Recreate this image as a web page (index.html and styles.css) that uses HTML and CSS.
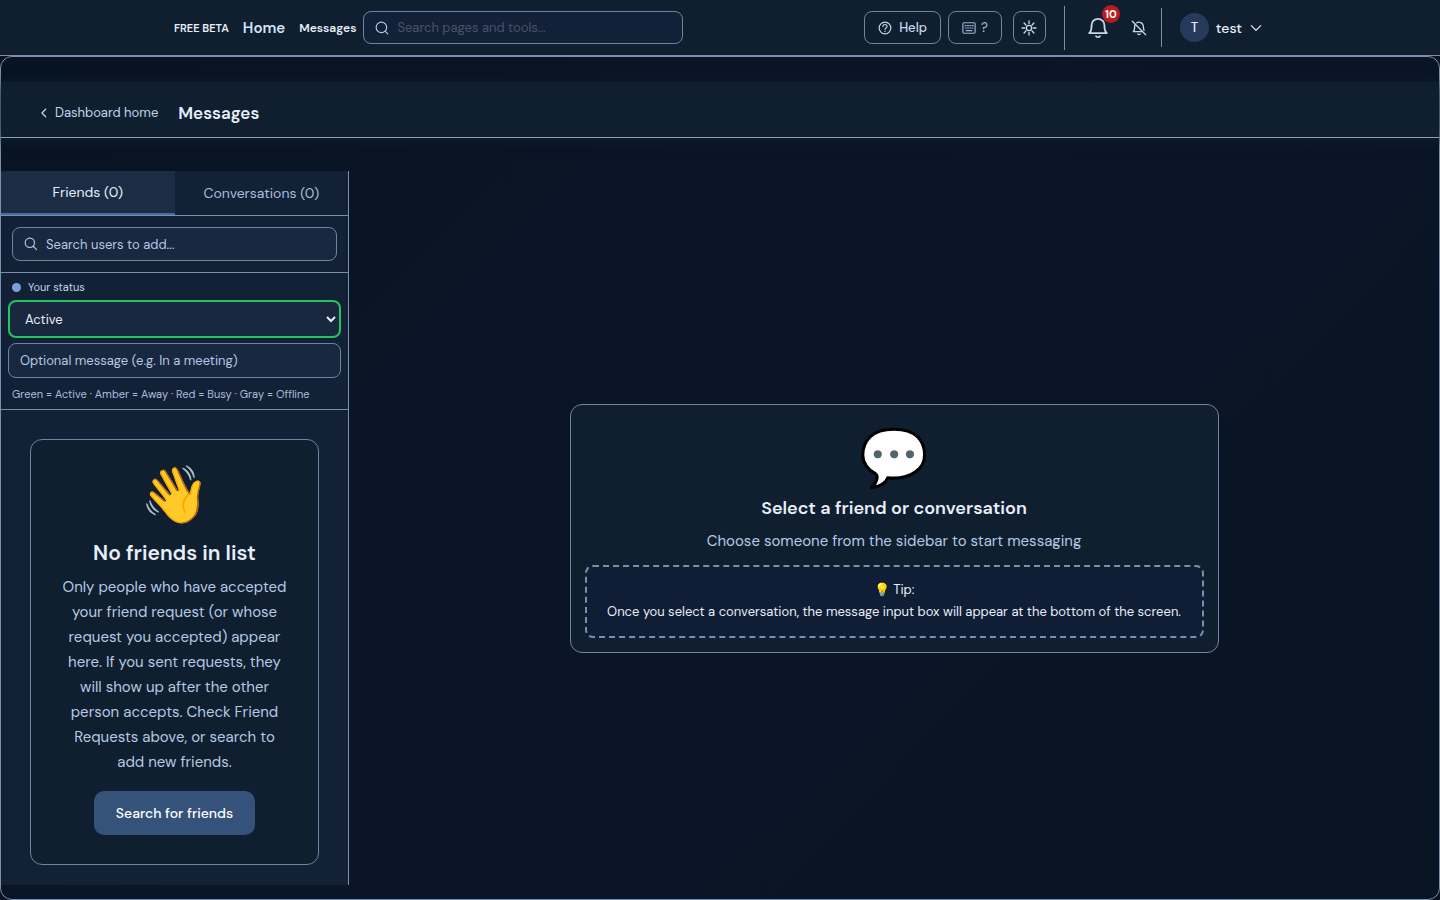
FILE: index.html
```
<!DOCTYPE html>
<html lang="en">
<head>
  <meta charset="UTF-8" />
  <meta name="viewport" content="width=device-width, initial-scale=1.0"/>
  <title>Messages</title>
  <link rel="stylesheet" href="styles.css">
</head>
<body>
  <header class="topbar">
    <div class="topbar-inner">
      <nav class="topnav">
        <span class="beta">FREE BETA</span>
        <a class="home-link" href="#">Home</a>
        <a class="messages-link" href="#">Messages</a>
      </nav>
      <label class="search-box top-search">
        <svg class="icon" viewBox="0 0 24 24"><circle cx="11" cy="11" r="9"/><path d="M22 22l-4.300-4.300"/></svg>
        <input type="search" placeholder="Search pages and tools..." aria-label="Search pages and tools">
      </label>
      <div class="tools">
        <button class="tool-btn" type="button">
          <svg class="icon" viewBox="0 0 24 24"><circle cx="12" cy="12" r="10"/><path d="M8.500 9.500a3.500 3.500 0 0 1 7 0c0 2.500-3.500 2.500-3.500 4.800M12 17.200v.6"/></svg>
          Help
        </button>
        <button class="tool-btn keys-btn" type="button" aria-label="Keyboard shortcuts">
          <svg class="icon" viewBox="0 0 24 24"><rect x="1.500" y="3" width="21" height="18" rx="2"/><path d="M5.500 8h1.500M9.500 8h1.500M13.500 8h1.500M17.500 8h1.500M5.500 12h1.500M9.500 12h1.500M13.500 12h1.500M17.500 12h1.500M7 16.500h10"/></svg>
          ?
        </button>
        <button class="tool-btn theme-btn" type="button" aria-label="Toggle theme">
          <svg class="icon icon-md" viewBox="0 0 24 24"><circle cx="12" cy="12" r="4"/><path d="M12 1.500v4M12 18.500v4M1.500 12h4M18.500 12h4M4.600 4.600l2.800 2.800M16.600 16.600l2.800 2.800M4.600 19.400l2.800-2.800M16.600 7.400l2.800-2.800"/></svg>
        </button>
        <div class="alerts">
          <button class="icon-btn" type="button" aria-label="Notifications">
            <svg class="icon icon-lg" viewBox="0 0 24 24"><path d="M2.500 17.500h19c-2-1.700-2.500-3.500-2.500-8.500a7 7 0 0 0-14 0c0 5-.5 6.800-2.500 8.500z"/><path d="M9.800 21c.5 1.300 3.900 1.300 4.400 0"/></svg>
            <span class="badge">10</span>
          </button>
          <button class="icon-btn" type="button" aria-label="Mute notifications">
            <svg class="icon icon-md" viewBox="0 0 24 24"><path d="M8.500 4.200A6.500 6.500 0 0 1 18.500 9c0 3 .4 5 1 6.500M16.500 17.500H3.500c1.800-1.700 2-3.500 2-8.500 0-.8.1-1.500.3-2.100M10 21c.6 1 3.400 1 4 0M2 2l20 20"/></svg>
          </button>
        </div>
        <button class="user-btn" type="button">
          <span class="avatar">T</span>
          test
          <svg class="icon" viewBox="0 0 24 24"><path d="M4 8l8 8 8-8"/></svg>
        </button>
      </div>
    </div>
  </header>

  <main class="page">
    <div class="page-bar">
      <a class="back-link" href="#">
        <svg class="icon icon-sm" viewBox="0 0 24 24"><path d="M16 3l-9 9 9 9"/></svg>
        Dashboard home
      </a>
      <h1>Messages</h1>
    </div>

    <div class="chat">
      <aside class="sidebar">
        <div class="tabs" role="tablist">
          <button class="tab active" type="button" role="tab" aria-selected="true">Friends (0)</button>
          <button class="tab" type="button" role="tab" aria-selected="false">Conversations (0)</button>
        </div>
        <div class="user-search">
          <label class="search-box">
            <svg class="icon" viewBox="0 0 24 24"><circle cx="10" cy="10" r="8"/><path d="M21.500 21.500l-5.700-5.700"/></svg>
            <input type="search" placeholder="Search users to add..." aria-label="Search users to add">
          </label>
        </div>
        <div class="status">
          <label class="status-label" for="status"><span class="dot"></span>Your status</label>
          <select id="status" class="status-field status-select">
            <option>Active</option>
            <option>Away</option>
            <option>Busy</option>
            <option>Offline</option>
          </select>
          <input class="status-field" type="text" placeholder="Optional message (e.g. In a meeting)" aria-label="Status message">
          <p class="legend">Green = Active · Amber = Away · Red = Busy · Gray = Offline</p>
        </div>
        <div class="friends">
          <div class="card no-friends">
            <div class="emoji">👋</div>
            <h2>No friends in list</h2>
            <p>Only people who have accepted your friend request (or whose request you accepted) appear here. If you sent requests, they will show up after the other person accepts. Check Friend Requests above, or search to add new friends.</p>
            <button class="primary-btn" type="button">Search for friends</button>
          </div>
        </div>
      </aside>

      <section class="conversation">
        <div class="card select-card">
          <div class="emoji">💬</div>
          <h2>Select a friend or conversation</h2>
          <p>Choose someone from the sidebar to start messaging</p>
          <div class="tip">
            <div>💡 Tip:</div>
            <div>Once you select a conversation, the message input box will appear at the bottom of the screen.</div>
          </div>
        </div>
      </section>
    </div>
  </main>
</body>
</html>
```

FILE: styles.css
```
* {
  box-sizing: border-box;
}
body {
  margin: 0;
  min-height: 100vh;
  display: flex;
  flex-direction: column;
  font-family: "DM Sans", Inter, "Liberation Sans", sans-serif;
  font-size: 13px;
  color: #e8eef8;
  background: linear-gradient(135deg, #081422, #0a1528 50%, #081422);
}
h1, h2, p {
  margin: 0;
}
a {
  color: inherit;
  text-decoration: none;
}
button, input, select {
  font: inherit;
  color: inherit;
}
button {
  cursor: pointer;
}
.icon {
  width: 14px;
  height: 14px;
  flex: none;
  fill: none;
  stroke: currentColor;
  stroke-width: 2;
  stroke-linecap: round;
  stroke-linejoin: round;
}
.icon-sm {
  width: 10px;
  height: 10px;
  stroke-width: 3;
}
.icon-md {
  width: 16px;
  height: 16px;
}
.icon-lg {
  width: 22px;
  height: 22px;
}

/* top bar */
.topbar {
  background: #101f30;
  border-bottom: 1px solid #7a8fae;
}
.topbar-inner {
  display: flex;
  align-items: center;
  gap: 7px;
  height: 55px;
  max-width: 1120px;
  margin: 0 auto;
  padding: 0 17px 0 14px;
}
.topnav {
  display: flex;
  align-items: center;
  gap: 14px;
  font-weight: 600;
}
.beta {
  font-size: 11px;
}
.home-link {
  font-size: 15px;
  color: #d3e2f8;
}
.messages-link {
  font-size: 12px;
}
.search-box {
  display: flex;
  align-items: center;
  gap: 8px;
  height: 34px;
  padding: 0 11px;
  border: 1px solid #6f83a3;
  border-radius: 8px;
  background: #19273f;
  color: #b6c8e4;
}
.search-box input {
  flex: 1;
  min-width: 0;
  padding: 0;
  border: 0;
  outline: 0;
  background: none;
}
.search-box input::placeholder {
  color: #b6c8e4;
}
.top-search {
  flex: 0 1 320px;
  height: 33px;
  background: #132138;
}
.top-search input::placeholder {
  color: #475368;
}
.tools {
  display: flex;
  align-items: center;
  gap: 7px;
  margin-left: auto;
}
.tool-btn {
  display: flex;
  align-items: center;
  justify-content: center;
  gap: 7px;
  height: 33px;
  padding: 0 13px;
  border: 1px solid #6f83a3;
  border-radius: 8px;
  background: none;
  color: #c6d6ee;
  font-weight: 500;
}
.keys-btn {
  gap: 5px;
  color: #9fb2cf;
}
.theme-btn {
  width: 33px;
  margin-left: 4px;
  padding: 0;
}
.alerts {
  display: flex;
  align-items: center;
  gap: 22px;
  height: 44px;
  margin-left: 11px;
  padding: 0 7px 0 22px;
  border-left: 1px solid #7a8fae;
}
.icon-btn {
  position: relative;
  display: flex;
  padding: 0;
  border: 0;
  background: none;
  color: #c6d6ee;
}
.badge {
  position: absolute;
  top: -12px;
  right: -11px;
  width: 18px;
  border-radius: 9px;
  background: #b91c1c;
  color: #fff;
  font-size: 11px;
  font-weight: 700;
  line-height: 18px;
  text-align: center;
}
.user-btn {
  display: flex;
  align-items: center;
  gap: 7px;
  height: 39px;
  padding: 0 0 0 18px;
  border: 0;
  border-left: 1px solid #7a8fae;
  background: none;
  font-size: 14px;
  font-weight: 500;
}
.avatar {
  width: 29px;
  border-radius: 50%;
  background: #263b5c;
  font-size: 13px;
  line-height: 29px;
}

/* page */
.page {
  flex: 1;
  display: flex;
  flex-direction: column;
  padding: 25px 0 14px;
  border: 1px solid #7a8fae;
  border-radius: 12px;
}
.page-bar {
  display: flex;
  align-items: center;
  gap: 20px;
  height: 56px;
  margin-bottom: 33px;
  padding: 6px 38px 0;
  border-bottom: 1px solid #8ba0bf;
  background: #101f30;
  box-shadow: 0 2px 12px #101f30;
}
.page-bar h1 {
  font-size: 17px;
  font-weight: 600;
}
.back-link {
  display: flex;
  align-items: center;
  gap: 6px;
  color: #c2d3ec;
}
.chat {
  flex: 1;
  display: flex;
}

/* sidebar */
.sidebar {
  display: flex;
  flex-direction: column;
  flex: 0 0 348px;
  border-right: 1px solid #7a8fae;
  background: #132137;
}
.tabs {
  display: flex;
  height: 45px;
  border-bottom: 1px solid #7a8fae;
}
.tab {
  flex: 1;
  border: 0;
  background: none;
  color: #a9bddb;
  font-size: 14px;
}
.tab.active {
  border-bottom: 2px solid #4a6a9e;
  background: #1b2c44;
  color: #e8eef8;
}
.user-search {
  padding: 11px;
  border-bottom: 1px solid #7a8fae;
}
.status {
  display: flex;
  flex-direction: column;
  gap: 5px;
  padding: 7px;
  border-bottom: 1px solid #7a8fae;
}
.status-label {
  display: flex;
  align-items: center;
  gap: 7px;
  padding: 0 4px;
  font-size: 11px;
  line-height: 15px;
  color: #c2d3ec;
}
.dot {
  width: 9px;
  height: 9px;
  border-radius: 50%;
  background: #7c9fdc;
}
.status-field {
  width: 100%;
  height: 35px;
  padding: 0 11px;
  border: 1px solid #6f83a3;
  border-radius: 8px;
  background: #19273f;
}
.status-field::placeholder {
  color: #b6c8e4;
}
.status-select {
  height: 38px;
  padding: 0 0 0 11px;
  border: 2px solid #22c55e;
}
.legend {
  padding: 3px 4px 0;
  font-size: 11px;
  line-height: 16px;
  color: #a9bddb;
}
.friends {
  padding: 29px 29px 20px;
}
.card {
  display: flex;
  flex-direction: column;
  align-items: center;
  border: 1px solid #6f83a3;
  border-radius: 12px;
  background: #101f30;
  text-align: center;
}
.card p {
  color: #b6c8e4;
  font-size: 15px;
  line-height: 25px;
}
.emoji {
  font-size: 56px;
  line-height: 62px;
}
.no-friends {
  padding: 24px 29px 29px;
}
.no-friends h2 {
  margin: 14px 0 9px;
  font-size: 21px;
  font-weight: 600;
  line-height: 26px;
}
.primary-btn {
  height: 44px;
  margin-top: 16px;
  padding: 0 22px;
  border: 0;
  border-radius: 10px;
  background: #35527b;
  color: #fff;
  font-size: 14px;
  font-weight: 500;
}

/* conversation */
.conversation {
  flex: 1;
  display: flex;
  align-items: center;
  justify-content: center;
}
.select-card {
  width: 100%;
  max-width: 649px;
  padding: 22px 14px 14px;
}
.select-card h2 {
  margin: 6px 0 8px;
  font-size: 18px;
  font-weight: 600;
  line-height: 26px;
}
.tip {
  width: 100%;
  margin-top: 11px;
  padding: 12px 14px 13px;
  border: 2px dashed #7a8fae;
  border-radius: 8px;
  background: #0f1d35;
  line-height: 22px;
}
```
